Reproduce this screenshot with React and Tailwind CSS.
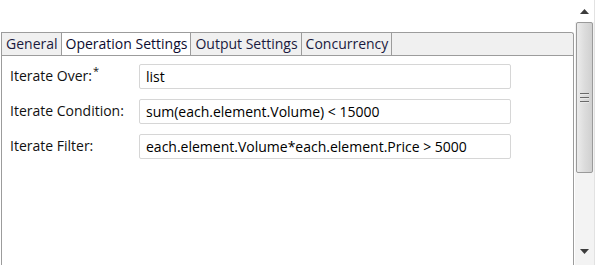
const tabs = ["General", "Operation Settings", "Output Settings", "Concurrency"];

const rows = [
  { label: "Iterate Over:", required: true, value: "list" },
  { label: "Iterate Condition:", value: "sum(each.element.Volume) < 15000" },
  { label: "Iterate Filter:", value: "each.element.Volume*each.element.Price > 5000" },
];

function Scrollbar() {
  return (
    <div className="w-[20px] h-full flex flex-col bg-[#f3f3f3] border-r border-[#e2e2e2]">
      <div className="h-[22px] flex items-center justify-center bg-white">
        <svg width="9" height="5" viewBox="0 0 9 5">
          <path d="M0 5 L4.5 0 L9 5 Z" fill="#3c3c3c" />
        </svg>
      </div>
      <div className="mx-[1px] h-[151px] rounded-[2px] border border-[#9a9a9a] bg-gradient-to-r from-[#ececec] via-[#dcdcdc] to-[#d0d0d0] flex items-center justify-center">
        <div className="flex flex-col gap-[2px]">
          <div className="w-[9px] h-[2px] bg-[#6a6a6a] border-b border-[#e8e8e8]" />
          <div className="w-[9px] h-[2px] bg-[#6a6a6a] border-b border-[#e8e8e8]" />
          <div className="w-[9px] h-[2px] bg-[#6a6a6a] border-b border-[#e8e8e8]" />
        </div>
      </div>
      <div className="flex-1" />
      <div className="h-[22px] flex items-start justify-center pt-[6px]">
        <svg width="9" height="5" viewBox="0 0 9 5">
          <path d="M0 0 L9 0 L4.5 5 Z" fill="#3c3c3c" />
        </svg>
      </div>
    </div>
  );
}

export default function App() {
  return (
    <div
      className="w-[600px] h-[265px] bg-white flex overflow-hidden text-[14px] text-[#111]"
      style={{ fontFamily: '"Segoe UI", "Open Sans", sans-serif' }}
    >
      <div className="w-[574px] pt-[32px] pl-[1px]">
        <div className="h-full border-l border-r border-t border-[#9c9c9c] rounded-tr-[3px]">
          <div className="h-[23px] flex bg-[#f0f0f0] border-b border-[#9c9c9c] rounded-tr-[3px]">
            {tabs.map((t, i) => (
              <div
                key={t}
                className={
                  "pl-[4px] pr-[3px] h-full flex items-center border-r border-[#9c9c9c] leading-none " +
                  (i === 1 ? "bg-white h-[23px] text-[#0c0c30]" : "text-[#1a1a40]")
                }
              >
                {t}
              </div>
            ))}
          </div>
          <div className="pt-[8px] flex flex-col gap-[10px]">
            {rows.map((r) => (
              <div key={r.label} className="flex items-center h-[25px]">
                <div className="w-[137px] pl-[8px] pb-[3px] text-[#111]">
                  {r.label}
                  {r.required && <sup className="text-[11px] ml-[1px]">*</sup>}
                </div>
                <div className="w-[372px] h-[25px] border border-[#d6d6d6] rounded-[2px] flex items-center px-[6px] text-[#000]">
                  {r.value}
                </div>
              </div>
            ))}
          </div>
        </div>
      </div>
      <div className="w-[1px]" />
      <Scrollbar />
    </div>
  );
}
